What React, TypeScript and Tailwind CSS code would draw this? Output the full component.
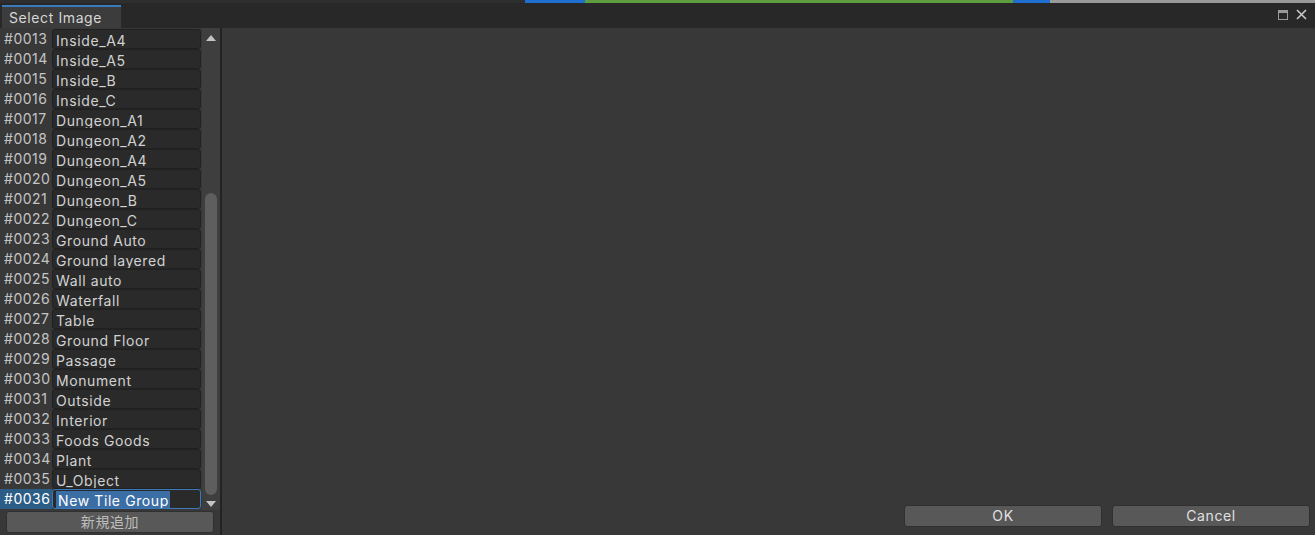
import React from "react";

const groups: string[] = [
  "Inside_A4",
  "Inside_A5",
  "Inside_B",
  "Inside_C",
  "Dungeon_A1",
  "Dungeon_A2",
  "Dungeon_A4",
  "Dungeon_A5",
  "Dungeon_B",
  "Dungeon_C",
  "Ground Auto",
  "Ground layered",
  "Wall auto",
  "Waterfall",
  "Table",
  "Ground Floor",
  "Passage",
  "Monument",
  "Outside",
  "Interior",
  "Foods Goods",
  "Plant",
  "U_Object",
  "New Tile Group",
];

const App: React.FC = () => {
  return (
    <div
      className="w-[1315px] h-[535px] overflow-hidden flex flex-col bg-[#383838] text-[14px] tracking-[0.6px] text-[#d2d2d2]"
      style={{ fontFamily: "Inter, 'Noto Sans CJK JP', sans-serif" }}
    >
      {/* editor peeking out behind the window */}
      <div className="h-[3px] flex shrink-0">
        <div className="w-[525px] bg-[#2e2e2e]" />
        <div className="w-[60px] bg-[#1f6fd0]" />
        <div className="w-[428px] bg-[#5f9e3e]" />
        <div className="w-[37px] bg-[#1f6fd0]" />
        <div className="flex-1 bg-[#9a9a9a]" />
      </div>

      {/* title bar */}
      <div className="h-[25px] shrink-0 flex items-end bg-[#282828] pl-[2px] pr-[8px]">
        <div className="w-[119px] h-[23px] bg-[#3c3c3c] border-t-2 border-[#3a79bb] flex items-center pl-[7px] text-[#d6d6d6]">
          Select Image
        </div>
        <div className="flex-1" />
        <div className="self-center flex items-center gap-[8px] mt-[-2px]">
          <div className="w-[10px] h-[10px] border border-[#9a9a9a] border-t-[3px]" />
          <svg width="11" height="11" viewBox="0 0 11 11">
            <path d="M1 1 L10 10 M10 1 L1 10" stroke="#c8c8c8" strokeWidth="1.6" />
          </svg>
        </div>
      </div>

      {/* body */}
      <div className="flex-1 flex min-h-0">
        {/* left panel */}
        <div className="w-[220px] flex flex-col">
          <div className="flex flex-1 min-h-0">
            <div className="w-[202px] pt-[1px] flex flex-col">
              {groups.map((name, i) => {
                const selected = i === groups.length - 1;
                return (
                  <div key={name} className="h-[20px] flex items-start">
                    <div
                      className={`w-[52px] h-[20px] pl-[4px] tracking-[0.5px] leading-[19px] ${
                        selected ? "bg-[#2c5d87] text-white" : "text-[#c4c4c4]"
                      }`}
                    >
                      #{String(13 + i).padStart(4, "0")}
                    </div>
                    <div
                      className={`w-[149px] h-[20px] rounded-[3px] border bg-[#2a2a2a] pl-[3px] pt-[3px] leading-[16px] overflow-hidden whitespace-nowrap ${
                        selected ? "border-[#3a79bb]" : "border-[#212121]"
                      }`}
                    >
                      {selected ? (
                        <span className="bg-[#3a6ea5] text-white pl-[2px] pr-[1px] py-[1px]">{name}</span>
                      ) : (
                        name
                      )}
                    </div>
                  </div>
                );
              })}
            </div>
            {/* scrollbar */}
            <div className="w-[18px] bg-[#3e3e3e] flex flex-col items-center pt-[7px] pb-[3px]">
              <svg width="10" height="6" viewBox="0 0 10 6">
                <path d="M5 0 L10 6 L0 6 Z" fill="#c4c4c4" />
              </svg>
              <div className="flex-1 w-full flex flex-col pt-[152px] pb-[6px] items-center">
                <div className="w-[12px] flex-1 rounded-full bg-[#5e5e5e]" />
              </div>
              <svg width="10" height="6" viewBox="0 0 10 6">
                <path d="M0 0 L10 0 L5 6 Z" fill="#c4c4c4" />
              </svg>
            </div>
          </div>
          <div className="h-[25px] px-[6px] pt-[1px] pb-[2px]">
            <button className="w-full h-full rounded-[3px] bg-[#585858] border border-[#303030] text-[#bdbdbd] leading-none">
              新規追加
            </button>
          </div>
        </div>

        {/* divider */}
        <div className="w-[2px] bg-[#232323]" />

        {/* right panel */}
        <div className="flex-1 flex flex-col">
          <div className="flex-1" />
          <div className="flex justify-end gap-[10px] pr-[5px] pb-[8px]">
            <button className="w-[198px] h-[22px] rounded-[3px] bg-[#585858] border border-[#303030] text-[#e0e0e0] leading-none">
              OK
            </button>
            <button className="w-[198px] h-[22px] rounded-[3px] bg-[#585858] border border-[#303030] text-[#e0e0e0] leading-none">
              Cancel
            </button>
          </div>
        </div>
      </div>
    </div>
  );
};

export default App;
